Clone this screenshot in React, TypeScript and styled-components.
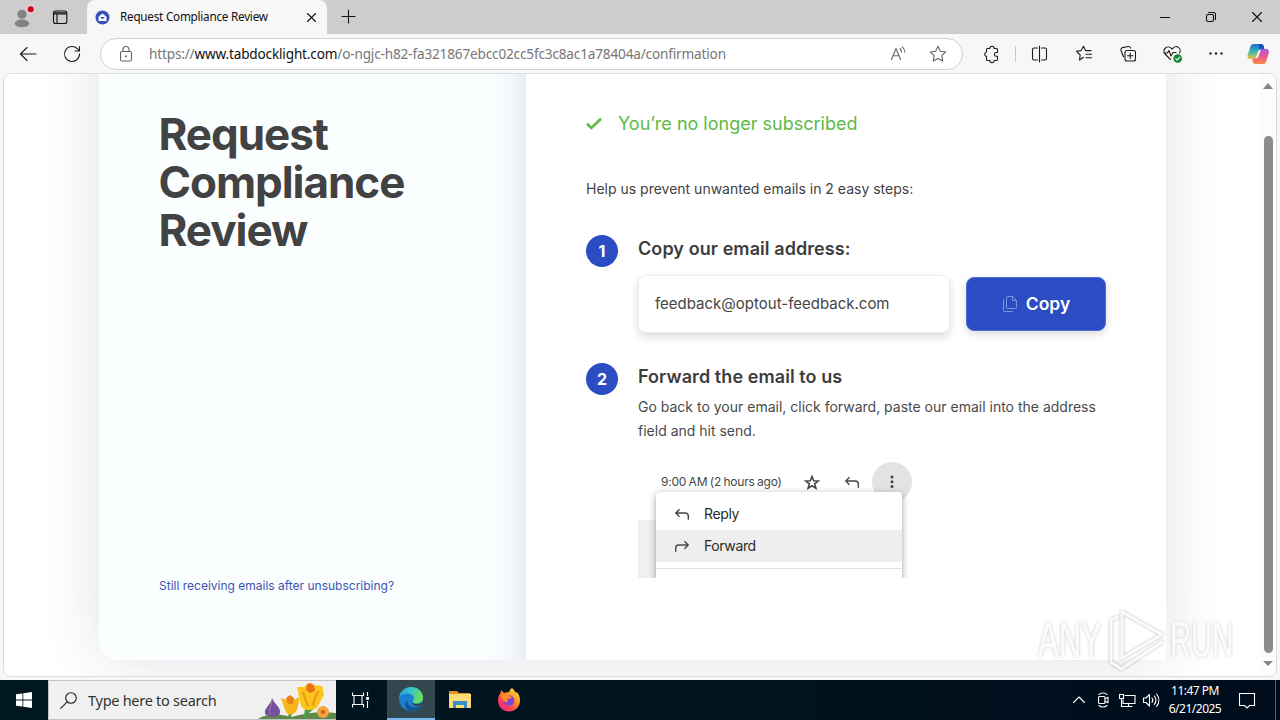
import React from 'react';
import styled, { createGlobalStyle } from 'styled-components';

const GlobalStyle = createGlobalStyle`
  * {
    box-sizing: border-box;
  }

  body {
    margin: 0;
    overflow: hidden;
    background: #f7f7f7;
  }
`;

const system = `'Noto Sans', 'Open Sans', sans-serif`;

/* ---------- browser window ---------- */

const Screen = styled.div`
  display: flex;
  flex-direction: column;
  width: 1280px;
  height: 720px;
  overflow: hidden;
  background: #f7f7f7;
  font-family: Inter, sans-serif;
`;

const Glyph = styled.svg<{ $w?: number }>`
  display: block;
  flex: none;
  width: ${({ $w = 20 }) => $w}px;
  height: ${({ $w = 20 }) => $w}px;
  overflow: visible;
  fill: none;
  stroke: currentColor;
  stroke-width: 1.1;
  stroke-linecap: round;
  stroke-linejoin: round;
`;

const TabStrip = styled.div`
  display: flex;
  align-items: center;
  flex: none;
  height: 34px;
  padding-left: 11px;
  background: #cdcdcd;
  color: #111;
`;

const TabActions = styled.div`
  display: flex;
  align-items: center;
  gap: 17px;
  width: 76px;
`;

const Tab = styled.div`
  display: flex;
  align-items: center;
  width: 240px;
  height: 34px;
  padding: 0 8px;
  border-radius: 8px 8px 0 0;
  background: #f7f7f7;
`;

const TabTitle = styled.span`
  flex: 1;
  margin-left: 10px;
  padding-bottom: 2px;
  font: 11.7px/16px ${system};
  letter-spacing: -0.23px;
  white-space: nowrap;
`;

const NewTab = styled.div`
  margin-left: 11px;
`;

const WindowButtons = styled.div`
  display: flex;
  gap: 26px;
  margin: 0 13px 0 auto;
`;

const Toolbar = styled.div`
  display: flex;
  align-items: center;
  flex: none;
  height: 39px;
  padding: 1px 0 0 18px;
  color: #1b1b1b;
`;

const NavButtons = styled.div`
  display: flex;
  gap: 24px;
  width: 82px;
`;

const AddressBar = styled.div`
  display: flex;
  align-items: center;
  width: 863px;
  height: 32px;
  padding: 0 14px 0 16px;
  border: 1px solid #d0d0d0;
  border-radius: 16px;
  background: #fff;
  color: #666;
`;

const Url = styled.span`
  flex: 1;
  margin-left: 14px;
  font: 13.6px/20px ${system};
  letter-spacing: -0.17px;
  color: #767676;
  white-space: nowrap;

  b {
    font-weight: 400;
    color: #111;
  }
`;

const AddressActions = styled.div`
  display: flex;
  gap: 20px;
`;

const ToolbarActions = styled.div`
  display: flex;
  align-items: center;
  gap: 24px;
  margin-left: 18px;
`;

const ToolbarDivider = styled.div`
  width: 1px;
  height: 16px;
  margin: 0 -10px;
  background: #c9c9c9;
`;

const Frame = styled.div`
  display: flex;
  flex: none;
  width: 1274px;
  height: 604px;
  margin: 0 0 3px 3px;
  border: 1px solid #dcdcdf;
  border-radius: 8px;
  background: #fff;
  overflow: hidden;
`;

const Viewport = styled.div`
  position: relative;
  width: 1257px;
  padding-left: 95px;
  overflow: hidden;
`;

const ScrollTrack = styled.div`
  display: flex;
  flex-direction: column;
  align-items: center;
  width: 14px;
  padding-top: 9px;
  background: #fcfcfc;
`;

const ScrollArrow = styled.div<{ $down?: boolean }>`
  width: 0;
  height: 0;
  border: 5px solid transparent;
  border-top: ${({ $down }) => ($down ? '5px solid #858585' : '0')};
  border-bottom: ${({ $down }) => ($down ? '0' : '6px solid #858585')};
`;

const ScrollThumb = styled.div`
  width: 9px;
  height: 517px;
  margin: 47px 0 8px;
  border-radius: 5px;
  background: #8b8b8b;
`;

/* ---------- page ---------- */

const Panel = styled.div`
  display: flex;
  width: 1067px;
  height: 686px;
  margin-top: -100px;
  border-radius: 20px;
  background: #fafeff;
  box-shadow: 0 0 60px rgba(50, 45, 90, 0.14);
`;

const Aside = styled.div`
  display: flex;
  flex-direction: column;
  justify-content: space-between;
  width: 427px;
  padding: 136px 0 65px 60px;
  border-radius: 20px 0 0 20px;
  background: linear-gradient(90deg, #fafeff 91%, #f4f8fb 96%, #e9eef2 100%);
`;

const Title = styled.h1`
  margin: 0 0 0 -0.5px;
  width: 300px;
  font-size: 44px;
  font-weight: 700;
  line-height: 48px;
  letter-spacing: -1.05px;
  color: #424242;
`;

const HelpLink = styled.a`
  font-size: 12px;
  line-height: 18px;
  color: #3c55b0;
`;

const Main = styled.div`
  width: 640px;
  padding: 136px 60px 0;
  background: #fff;
`;

const Status = styled.div`
  display: flex;
  align-items: center;
  gap: 16px;
  height: 26px;
  margin-bottom: 41px;
  font-size: 18px;
  color: #5dba46;
`;

const Intro = styled.p`
  margin: 0;
  font-size: 14px;
  line-height: 24px;
  color: #424242;
`;

const Step = styled.div<{ $top: number }>`
  display: flex;
  gap: 20px;
  margin-top: ${({ $top }) => $top}px;
`;

const StepNumber = styled.div`
  display: flex;
  align-items: center;
  justify-content: center;
  flex: none;
  width: 32px;
  height: 32px;
  border-radius: 50%;
  background: #2c4cc4;
  color: #fff;
  font-size: 16px;
  font-weight: 700;
`;

const StepBody = styled.div`
  width: 468px;
`;

const StepTitle = styled.h2`
  margin: 0;
  font-size: 18px;
  font-weight: 600;
  line-height: 28px;
  letter-spacing: 0.08px;
  color: #3d3d3d;
`;

const CopyRow = styled.div`
  display: flex;
  align-items: center;
  gap: 16px;
  margin-top: 12px;
`;

const EmailField = styled.div`
  width: 312px;
  height: 58px;
  padding: 0 16px;
  border: 1px solid #eee;
  border-radius: 8px;
  box-shadow: 0 4px 8px rgba(0, 0, 0, 0.14);
  font-size: 15px;
  line-height: 56px;
  color: #454545;
`;

const CopyButton = styled.button`
  display: flex;
  align-items: center;
  justify-content: center;
  gap: 8px;
  width: 140px;
  height: 54px;
  padding: 0;
  border: 1px solid #4a70dc;
  border-radius: 8px;
  background: #2c4cc4;
  box-shadow: 0 3px 8px rgba(0, 0, 0, 0.14);
  color: #fff;
  font: 600 17.5px/28px Inter, sans-serif;
`;

const StepText = styled.p`
  margin: 4px 0 0;
  font-size: 14px;
  line-height: 24px;
  color: #4a4a4a;
`;

const MailPreview = styled.div`
  position: relative;
  width: 292px;
  height: 117px;
  margin-top: 18px;
  overflow: hidden;
  color: #444746;
`;

const MailHeader = styled.div`
  display: flex;
  align-items: center;
  height: 42px;
  padding-left: 23px;
`;

const MailTime = styled.span`
  width: 141px;
  padding-bottom: 2px;
  font-size: 12px;
  letter-spacing: -0.2px;
  word-spacing: -0.8px;
  white-space: nowrap;
`;

const MailIcons = styled.div`
  display: flex;
  align-items: center;
`;

const StarSlot = styled.div`
  margin-right: 20px;
`;

const MoreButton = styled.div`
  display: flex;
  align-items: center;
  justify-content: center;
  width: 40px;
  height: 40px;
  margin-left: 10px;
  border-radius: 50%;
  background: #e3e3e3;
`;

const MailBody = styled.div`
  width: 19px;
  height: 58px;
  margin-top: 17px;
  background: #f0f0f0;
`;

const MailMenu = styled.div`
  position: absolute;
  top: 31px;
  left: 18px;
  width: 246px;
  height: 100px;
  padding-top: 6px;
  border-radius: 4px 4px 0 0;
  background: #fff;
  box-shadow: 0 2px 7px rgba(0, 0, 0, 0.38);
`;

const MenuItem = styled.div<{ $active?: boolean }>`
  display: flex;
  align-items: center;
  gap: 12px;
  height: 32px;
  padding-left: 16px;
  background: ${({ $active }) => ($active ? '#eee' : '#fff')};
  color: #2b2b2b;
  font-size: 14px;
  letter-spacing: -0.38px;

  span {
    padding-bottom: 2px;
  }
`;

const MenuRule = styled.div`
  margin-top: 6px;
  border-top: 1px solid #e3e3e3;
`;

const Watermark = styled.div`
  position: absolute;
  left: 1028px;
  top: 531px;
  display: flex;
  align-items: center;
  width: 204px;
  height: 70px;
  opacity: 0.85;
`;

const WatermarkWord = styled.span<{ $scale: number }>`
  width: 64px;
  margin: 0 2px 0 6px;
  font: 50px/64px 'Liberation Sans', sans-serif;
  color: #fbfbfb;
  -webkit-text-stroke: 1px #fbfbfb;
  text-shadow: 0 0 4px rgba(0, 0, 0, 0.34);
  white-space: nowrap;
  transform: scaleX(${({ $scale }) => $scale});
  transform-origin: 0 50%;
`;

/* ---------- taskbar ---------- */

const Taskbar = styled.div`
  display: flex;
  flex: none;
  height: 40px;
  background: linear-gradient(90deg, #001721, #00131e 60%, #000c1c);
  color: #fff;
`;

const TaskCell = styled.div<{ $active?: boolean; $width?: number }>`
  display: flex;
  align-items: center;
  justify-content: center;
  width: ${({ $width = 49 }) => $width}px;
  background: ${({ $active }) => ($active ? '#33474f' : 'transparent')};
  border-bottom: ${({ $active }) => ($active ? '2px solid #76b9ed' : '0')};
`;

const Search = styled.div`
  display: flex;
  align-items: center;
  width: 288px;
  padding-left: 11px;
  border: 1px solid #bfc3c4;
  border-right: 0;
  background: #f0f0f0;
  color: #1f1f1f;
`;

const SearchText = styled.span`
  flex: 1;
  margin-left: 11px;
  font: 14.5px/20px ${system};
  letter-spacing: -0.27px;
  color: #333;
  white-space: nowrap;
`;

const Flowers = styled.svg`
  flex: none;
  width: 78px;
  height: 38px;
`;

const Tray = styled.div`
  display: flex;
  align-items: center;
  gap: 4px;
  margin-left: auto;
`;

const Clock = styled.div`
  width: 64px;
  margin: 0 6px 0 -2px;
  font: 12px/18px ${system};
  letter-spacing: -0.5px;
  text-align: center;
  white-space: nowrap;
`;

const ShowDesktop = styled.div`
  width: 5px;
  height: 40px;
  margin-left: 14px;
  border-left: 1px solid #54616b;
`;

const BackArrow = () => (
  <Glyph viewBox="0 0 20 20">
    <path d="M9 3.5 2.5 10 9 16.5M2.5 10h15.5" />
  </Glyph>
);

const STAR = 'M10 2.3l2.35 4.9 5.4.75-3.95 3.75.97 5.35L10 14.5l-4.77 2.55.97-5.35L2.25 7.95l5.4-.75z';

const ReplyIcon = ({ flip }: { flip?: boolean }) => (
  <Glyph viewBox="0 0 20 20" style={{ strokeWidth: 1.4, strokeLinecap: 'butt', strokeLinejoin: 'miter', color: '#444746' }}>
    <g transform={flip ? 'translate(20 0) scale(-1 1)' : undefined}>
      <path d="M7.5 5.300 3.800 9l3.700 3.700M4 9h9.200c2 0 3.100 1.200 3.100 3v3.800" />
    </g>
  </Glyph>
);

const BrowserTop = () => (
  <>
    <TabStrip>
      <TabActions>
        <Glyph viewBox="0 0 22 24" $w={22} style={{ stroke: 'none' }}>
          <circle cx="11" cy="9" r="5" fill="#85827f" />
          <ellipse cx="11" cy="19" rx="8" ry="4.300" fill="#85827f" />
          <circle cx="20.500" cy="3.500" r="5.500" fill="#e3cfd1" />
          <circle cx="20.500" cy="3.500" r="3.300" fill="#d0021b" />
        </Glyph>
        <Glyph viewBox="0 0 20 20">
          <rect x="3.500" y="4" width="13.300" height="12.500" rx="2" />
          <path d="M4 5.800h12.500M4 7h12.500M7 7v9" />
        </Glyph>
      </TabActions>
      <Tab>
        <Glyph viewBox="0 0 16 16" $w={15} style={{ stroke: 'none' }}>
          <circle cx="8" cy="8" r="7.500" fill="#3850bd" />
          <path d="M3.800 7.300 8 3.800l4.200 3.500v4.500H3.800z" fill="#fff" />
          <path d="M5.300 7.500h5.400L8 9.800z" fill="#3850bd" />
        </Glyph>
        <TabTitle>Request Compliance Review</TabTitle>
        <Glyph viewBox="0 0 16 16" $w={16}>
          <path d="m4.500 4.500 8 8m0-8-8 8" />
        </Glyph>
      </Tab>
      <NewTab>
        <Glyph viewBox="0 0 20 20">
          <path d="M10.500 3v13M4 9.500h13" />
        </Glyph>
      </NewTab>
      <WindowButtons>
        <Glyph viewBox="0 0 20 20">
          <path d="M5.500 10.500h9" />
        </Glyph>
        <Glyph viewBox="0 0 20 20">
          <rect x="5.500" y="7.500" width="7" height="7" rx="1.500" />
          <path d="M7.500 5.500h5a2 2 0 0 1 2 2v5" />
        </Glyph>
        <Glyph viewBox="0 0 20 20">
          <path d="m5.500 5.500 9 9m0-9-9 9" />
        </Glyph>
      </WindowButtons>
    </TabStrip>
    <Toolbar>
      <NavButtons>
        <BackArrow />
        <Glyph viewBox="0 0 20 20">
          <path d="M17.500 10A7.500 7.500 0 1 1 15.300 4.700l2 2M17.500 2.500v4.500H13" />
        </Glyph>
      </NavButtons>
      <AddressBar>
        <Glyph viewBox="0 0 18 18" $w={18}>
          <rect x="3.500" y="6.500" width="11" height="9.500" rx="1.500" />
          <path d="M6 6.500V4.500a3 3 0 0 1 6 0v2" />
          <circle cx="9" cy="11.200" r=".5" fill="currentColor" />
        </Glyph>
        <Url>
          https://<b>www.tabdocklight.com</b>/o-ngjc-h82-fa321867ebcc02cc5fc3c8ac1a78404a/confirmation
        </Url>
        <AddressActions>
          <Glyph viewBox="0 0 20 20">
            <path d="m3.500 15.500 4.500-11 4.500 11M5.200 11.800h5.600M12 4.500c1 1 1.500 2 1.500 3.500M14.200 2.800c1.600 1.400 2.600 3.200 2.600 5.400" />
          </Glyph>
          <Glyph viewBox="0 0 20 20">
            <path d={STAR} />
          </Glyph>
        </AddressActions>
      </AddressBar>
      <ToolbarActions>
        <Glyph viewBox="0 0 20 20">
          <path d="M6.500 4.500h2.300a2.200 2.200 0 0 1 4.400 0h2.300a1 1 0 0 1 1 1v3h-1.200a1.900 1.900 0 0 0 0 3.800h1.200v3.200a1 1 0 0 1-1 1h-2.300a2.200 2.200 0 0 1-4.400 0H6.500a1 1 0 0 1-1-1v-3a2.300 2.300 0 0 1 0-4.500V5.500a1 1 0 0 1 1-1" />
        </Glyph>
        <ToolbarDivider />
        <Glyph viewBox="0 0 20 20">
          <path d="M7.500 4H4a1.500 1.500 0 0 0-1.500 1.500v9A1.500 1.500 0 0 0 4 16h3.500M11.500 4H15a1.500 1.500 0 0 1 1.500 1.500v9A1.500 1.500 0 0 1 15 16h-3.500M9.500 2v16" />
        </Glyph>
        <Glyph viewBox="0 0 20 20">
          <path d="m9.500 13.300-4 2.700.7-5L2.500 7.300l4.700-.7 2.300-4.300 2 4.300H17M12 10.300h5.500M12 13.800h5.500" />
        </Glyph>
        <Glyph viewBox="0 0 20 20">
          <path d="M5.500 12.700 3 6.500A2.500 2.500 0 0 1 4.300 3.600l6-1.100a2 2 0 0 1 2.300 1.700" />
          <rect x="7" y="6.500" width="10.500" height="10.500" rx="2" />
          <path d="M12.250 9v5.500M9.500 11.750h5.500" />
        </Glyph>
        <Glyph viewBox="0 0 20 20">
          <path d="M8.500 15.500 3 10a4 4 0 0 1 6.500-5.500l.5.700.7-.7A4 4 0 0 1 17.500 9M1.800 9h3.700l1.500-2.500L9 12l2-3.500h3" />
          <circle cx="15.700" cy="14.500" r="4.300" fill="#16832c" stroke="none" />
          <path d="m13.700 14.700 1.500 1.400 2.600-3" stroke="#fff" />
        </Glyph>
        <Glyph viewBox="0 0 20 20" style={{ fill: '#222', stroke: 'none' }}>
          <circle cx="4.500" cy="9.500" r="1.200" />
          <circle cx="10" cy="9.500" r="1.200" />
          <circle cx="15.500" cy="9.500" r="1.200" />
        </Glyph>
        <CopilotLogo />
      </ToolbarActions>
    </Toolbar>
  </>
);

const CopilotLogo = () => (
  <Glyph viewBox="3 0 24 22" $w={22} style={{ stroke: 'none' }}>
    <defs>
      <linearGradient id="cop-a" x1="0" y1="0" x2="0" y2="1">
        <stop stopColor="#1b68d8" />
        <stop offset=".5" stopColor="#35b8b0" />
        <stop offset="1" stopColor="#f2c536" />
      </linearGradient>
      <linearGradient id="cop-b" x1="0" y1="0" x2="0" y2="1">
        <stop stopColor="#a65ce6" />
        <stop offset=".5" stopColor="#ee5b8c" />
        <stop offset="1" stopColor="#fa8c43" />
      </linearGradient>
    </defs>
    <path d="M7 0h8c2 0 2.500 1 3 3l.7 3H15c-2 0-3 1-3.500 3L9.500 15c-.5 1-1 1.500-2 1.500H3C.5 16.500 0 14 .6 11.500l2.600-8C4 1 5 0 7 0z" fill="url(#cop-a)" />
    <path d="M13 0h2c2 0 2.500 1 3 3l.7 3H15c-1.300 0-2-1-2.300-2z" fill="#1554bb" />
    <path d="M17 22H9c-2 0-2.500-1-3-3l-.7-3H9c2 0 3-1 3.500-3l2-6c.5-1 1-1.500 2-1.500H21c2.500 0 3 2.500 2.400 5l-2.600 8C20 21 19 22 17 22z" fill="url(#cop-b)" />
  </Glyph>
);

const MailExample = () => (
  <MailPreview>
    <MailHeader>
      <MailTime>9:00 AM (2 hours ago)</MailTime>
      <MailIcons>
        <StarSlot>
          <Glyph viewBox="0 0 20 20" style={{ strokeWidth: 1.6, strokeLinejoin: 'miter' }}>
            <path d="m10 4.500 1.700 4.200 4.500.3-3.500 2.900 1.200 4.400L10 13.800l-3.900 2.500 1.200-4.400L3.800 9l4.500-.3z" />
          </Glyph>
        </StarSlot>
        <ReplyIcon />
        <MoreButton>
          <Glyph viewBox="0 0 20 20" style={{ fill: '#444746', stroke: 'none' }}>
            <circle cx="10" cy="5" r="1.500" />
            <circle cx="10" cy="9.700" r="1.500" />
            <circle cx="10" cy="14.400" r="1.500" />
          </Glyph>
        </MoreButton>
      </MailIcons>
    </MailHeader>
    <MailBody />
    <MailMenu>
      <MenuItem>
        <ReplyIcon />
        <span>Reply</span>
      </MenuItem>
      <MenuItem $active>
        <ReplyIcon flip />
        <span>Forward</span>
      </MenuItem>
      <MenuRule />
    </MailMenu>
  </MailPreview>
);

const Page = () => (
  <Frame>
    <Viewport>
      <Panel>
        <Aside>
          <Title>Request Compliance Review</Title>
          <HelpLink>Still receiving emails after unsubscribing?</HelpLink>
        </Aside>
        <Main>
          <Status>
            <Glyph viewBox="0 0 16 16" $w={16} style={{ strokeWidth: 2.7, strokeLinecap: 'butt', strokeLinejoin: 'miter' }}>
              <path d="m1 8.800 4.300 4.200L15 3.800" />
            </Glyph>
            You’re no longer subscribed
          </Status>
          <Intro>Help us prevent unwanted emails in 2 easy steps:</Intro>
          <Step $top={34}>
            <StepNumber>1</StepNumber>
            <StepBody>
              <StepTitle>Copy our email address:</StepTitle>
              <CopyRow>
                <EmailField>feedback@optout-feedback.com</EmailField>
                <CopyButton>
                  <Glyph viewBox="0 0 16 16" $w={16} style={{ color: '#7d93de', strokeWidth: 1 }}>
                    <path d="M5.500.5h5L14.500 4.500v7a1 1 0 0 1-1 1h-8a1 1 0 0 1-1-1v-10a1 1 0 0 1 1-1zM10.500.5v4h4M1.500 3.500v11a1 1 0 0 0 1 1h8" />
                  </Glyph>
                  Copy
                </CopyButton>
              </CopyRow>
            </StepBody>
          </Step>
          <Step $top={30}>
            <StepNumber>2</StepNumber>
            <StepBody>
              <StepTitle>Forward the email to us</StepTitle>
              <StepText>
                Go back to your email, click forward, paste our email into the address field and hit send.
              </StepText>
              <MailExample />
            </StepBody>
          </Step>
        </Main>
      </Panel>
      <Watermark>
        <WatermarkWord $scale={0.62}>ANY</WatermarkWord>
        <Glyph viewBox="0 0 60 60" $w={60} style={{ stroke: '#fbfbfb', strokeWidth: 3, filter: 'drop-shadow(0 0 1.5px rgba(0,0,0,.32))' }}>
          <path d="M18 48V2l40 22.500zM13 7l-6 3v42l10 7 41-27" />
        </Glyph>
        <WatermarkWord $scale={0.585}>RUN</WatermarkWord>
      </Watermark>
    </Viewport>
    <ScrollTrack>
      <ScrollArrow />
      <ScrollThumb />
      <ScrollArrow $down />
    </ScrollTrack>
  </Frame>
);

const WindowsTaskbar = () => (
  <Taskbar>
    <TaskCell $width={48}>
      <Glyph viewBox="0 0 16 16" $w={16} style={{ fill: '#fff', stroke: 'none' }}>
        <path d="M0 2.300 6.500 1.400v6.200H0zM7.300 1.300 16 0v7.600H7.300zM0 8.400h6.500v6.200L0 13.700zM7.300 8.400H16V16l-8.700-1.300z" />
      </Glyph>
    </TaskCell>
    <Search>
      <Glyph viewBox="0 0 17 17" $w={17}>
        <circle cx="11" cy="6" r="5.300" />
        <path d="M7.200 9.800.7 16.300" />
      </Glyph>
      <SearchText>Type here to search</SearchText>
      <Flowers viewBox="0 0 78 38">
        <path d="M0 38c10-6 22-5 34-2 12-4 30-6 44-4v6z" fill="#608849" />
        <path d="M32 38V28M47 38c1-8 2-8 1-14M46 38c2-6 4-8 12-13" fill="none" stroke="#4b9b43" strokeWidth="3" />
        <path d="M14 17c2 6 9 9 8 15-1 5-14 5-15 0-1-5 6-8 7-15z" fill="#75509c" />
        <path d="M14 20c-1 6-3 8-2 14" stroke="#a276bb" fill="none" />
        <path d="m23 17 6 2 3-4 3 4 7-3-3 13c-3 6-10 6-12 0z" fill="#f8b719" />
        <path d="m28 17 4-3 4 3-1 6h-5z" fill="#e88118" />
        <path d="m39 6 7 0 4-4 5 2 9 1 2 9-6 11c-3 5-14 6-17 0z" fill="#fbc51c" />
        <path d="M49 4c2-3 6-2 7 1l1 5-5 2-4-3z" fill="#ea7017" />
        <path d="M45 11c1 5 3 8 5 14M61 10c-4 4-5 9-6 15" stroke="#e99b13" fill="none" strokeWidth="2" />
        <circle cx="65" cy="31" r="6" fill="#f4a43f" />
        <circle cx="65" cy="31" r="2" fill="#c95d20" />
      </Flowers>
    </Search>
    <TaskCell $width={51}>
      <Glyph viewBox="2 0 18 18" $w={18} style={{ strokeLinecap: 'butt', strokeLinejoin: 'miter' }}>
        <path d="M1.500 1.500v3h11v-3M1.500 16.500v-3h11v3M3 4.500v9M11 4.500v9M16.500 1v4M16.500 10v7" />
        <rect x="15.200" y="6" width="2.800" height="2.800" fill="#fff" stroke="none" />
      </Glyph>
    </TaskCell>
    <TaskCell $active $width={48}>
      <EdgeLogo />
    </TaskCell>
    <TaskCell>
      <Glyph viewBox="0 0 22 20" $w={22} style={{ stroke: 'none' }}>
        <path d="M0 1h8l2 2h11v4H0z" fill="#e3932b" />
        <path d="M0 4h22v14H0z" fill="#fadb75" />
        <path d="M4 11h14v7h-3v-3H7v3H4z" fill="#3c8dcc" />
      </Glyph>
    </TaskCell>
    <TaskCell>
      <FirefoxLogo />
    </TaskCell>
    <Tray>
      <Glyph viewBox="0 0 20 20">
        <path d="m4.500 12.500 5.500-5.500 5.500 5.500" />
      </Glyph>
      <Glyph viewBox="0 0 20 20">
        <path d="M6 4.500c2-2 6-2 8 0M6 15.500c2 2 6 2 8 0M12 8.700l3-1.500v5.500l-3-1.500" />
        <rect x="5.500" y="6.500" width="6.500" height="7" rx="1" />
      </Glyph>
      <Glyph viewBox="0 0 20 20" style={{ strokeLinejoin: 'miter' }}>
        <path d="M8 5.500h10v8H6V10M11.500 13.500v3M7 16.500h8M2.500 4.500h4v4h-4zM4.500 8.500v8h2" />
      </Glyph>
      <Glyph viewBox="0 0 20 20">
        <path d="M2.500 8v4.500h2.500L8.500 16V4.500L5 8zM11 8c1 1.300 1 3 0 4.300M13.300 6c2 2.500 2 6 0 8.400M15.600 4c3 3.700 3 8.700 0 12.400" />
      </Glyph>
      <Clock>
        11:47 PM
        <br />
        6/21/2025
      </Clock>
      <Glyph viewBox="0 0 20 20" style={{ strokeLinejoin: 'miter' }}>
        <path d="M2.500 3.500h15v12h-5L10 18l-2.500-2.500h-5z" />
      </Glyph>
      <ShowDesktop />
    </Tray>
  </Taskbar>
);

const EdgeLogo = () => (
  <Glyph viewBox="0 0 24 24" $w={24} style={{ stroke: 'none' }}>
    <defs>
      <linearGradient id="edge-top" x1="0" y1="0" x2="1" y2="0.300">
        <stop stopColor="#219ad9" />
        <stop offset="0.500" stopColor="#36c3c9" />
        <stop offset="1" stopColor="#66df58" />
      </linearGradient>
    </defs>
    <circle cx="12" cy="12" r="12" fill="#1b80cf" />
    <path d="M.3 10C1.300 4 6.300 0 12 0c7 0 12 5 12 10.500 0 4-3 6-6.500 6-3 0-4.500-1-3.500-2.500 3-5-2-8-6-7.500C4.500 6.800 2 8.300.3 10z" fill="url(#edge-top)" />
    <path d="M8 13c0 6 6 10 14.500 5.500C20 22 16 24 12 24 6.500 23.500 4.500 17 8 13z" fill="#145296" />
    <path d="M14 14c-1 1.500.5 3 3.500 3 3 0 5-1 6-3-.3 2-.6 3-1 4-6 3-11 0-8.500-4z" fill="#33474f" />
  </Glyph>
);

const FirefoxLogo = () => (
  <Glyph viewBox="0 0 24 24" $w={24} style={{ stroke: 'none' }}>
    <defs>
      <linearGradient id="fx-body" x1="1" y1="0" x2="0.200" y2="1">
        <stop stopColor="#fff04a" />
        <stop offset="0.400" stopColor="#ff9a27" />
        <stop offset="0.750" stopColor="#ff4055" />
        <stop offset="1" stopColor="#e42288" />
      </linearGradient>
    </defs>
    <path d="M15 0c2 2 3 3 4 5l1-1c2 3 3 5 3 8.500C23 19 18 23.500 12 23.500S1 19 1 12.500C1 9 2 7 3.500 5l.5-3 3 3c1-.5 3-1 5-.7C12.500 2.500 13.500 1 15 0z" fill="url(#fx-body)" />
    <circle cx="12" cy="12.500" r="5.300" fill="#8045d8" />
    <path d="M4 7c2-2 6-2 8 1l3 1c-1 1.500-3 1.500-4 2-1 1-1 2 0 3-4 1-6-3-7-7z" fill="#ff8b2b" />
  </Glyph>
);

const App: React.FC = () => {
  return (
    <Screen>
      <GlobalStyle />
      <BrowserTop />
      <Page />
      <WindowsTaskbar />
    </Screen>
  );
};

export default App;
